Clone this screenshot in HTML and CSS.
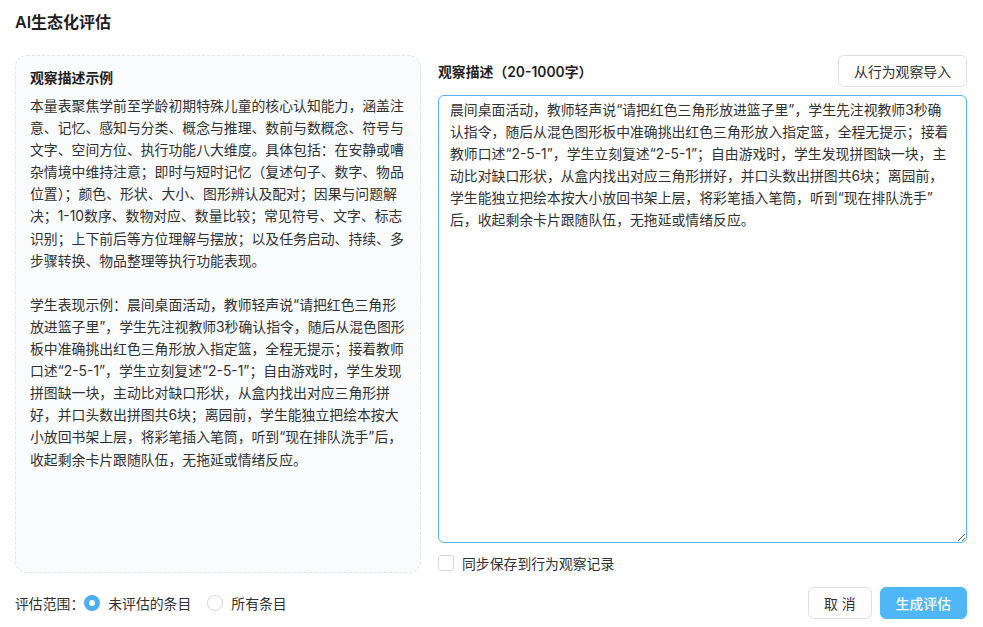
FILE: index.html
```html
<!DOCTYPE html>
<html lang="zh-CN">
<head>
  <meta charset="UTF-8">
  <meta name="viewport" content="width=device-width, initial-scale=1.0">
  <title>AI生态化评估</title>
  <link rel="stylesheet" href="styles.css">
</head>
<body>
  <div class="dialog">
    <div class="dialog-title">AI生态化评估</div>

    <div class="dialog-body">
      <div class="example-panel">
        <h3>观察描述示例</h3>
        <p>本量表聚焦学前至学龄初期特殊儿童的核心认知能力，涵盖注意、记忆、感知与分类、概念与推理、数前与数概念、符号与文字、空间方位、执行功能八大维度。具体包括：在安静或嘈杂情境中维持注意；即时与短时记忆（复述句子、数字、物品位置）；颜色、形状、大小、图形辨认及配对；因果与问题解决；1-10数序、数物对应、数量比较；常见符号、文字、标志识别；上下前后等方位理解与摆放；以及任务启动、持续、多步骤转换、物品整理等执行功能表现。</p>
        <p>学生表现示例：晨间桌面活动，教师轻声说“请把红色三角形放进篮子里”，学生先注视教师3秒确认指令，随后从混色图形板中准确挑出红色三角形放入指定篮，全程无提示；接着教师口述“2-5-1”，学生立刻复述“2-5-1”；自由游戏时，学生发现拼图缺一块，主动比对缺口形状，从盒内找出对应三角形拼好，并口头数出拼图共6块；离园前，学生能独立把绘本按大小放回书架上层，将彩笔插入笔筒，听到“现在排队洗手”后，收起剩余卡片跟随队伍，无拖延或情绪反应。</p>
      </div>

      <div class="input-panel">
        <div class="input-head">
          <span class="input-label">观察描述（20-1000字）</span>
          <button class="btn">从行为观察导入</button>
        </div>
        <textarea class="desc-input">晨间桌面活动，教师轻声说“请把红色三角形放进篮子里”，学生先注视教师3秒确认指令，随后从混色图形板中准确挑出红色三角形放入指定篮，全程无提示；接着教师口述“2-5-1”，学生立刻复述“2-5-1”；自由游戏时，学生发现拼图缺一块，主动比对缺口形状，从盒内找出对应三角形拼好，并口头数出拼图共6块；离园前，学生能独立把绘本按大小放回书架上层，将彩笔插入笔筒，听到“现在排队洗手”后，收起剩余卡片跟随队伍，无拖延或情绪反应。</textarea>
        <label class="check-row">
          <input type="checkbox" class="check-box">
          <span>同步保存到行为观察记录</span>
        </label>
      </div>
    </div>

    <div class="dialog-footer">
      <div class="scope">
        <span>评估范围：</span>
        <label class="radio">
          <input type="radio" name="scope" checked>
          <span>未评估的条目</span>
        </label>
        <label class="radio">
          <input type="radio" name="scope">
          <span>所有条目</span>
        </label>
      </div>
      <div class="actions">
        <button class="btn">取 消</button>
        <button class="btn btn-primary">生成评估</button>
      </div>
    </div>
  </div>
</body>
</html>
```

FILE: styles.css
```css
body {
  margin: 0;
  background-color: #fff;
  color: #303133;
  font-family: "Inter", "Noto Sans CJK SC", sans-serif;
  font-size: 13.85px;
}

.dialog {
  padding: 0 16px 0 15px;
}

.dialog-title {
  height: 44px;
  margin-bottom: 11px;
  line-height: 44px;
  font-size: 16px;
  font-weight: 600;
  color: #1f1f1f;
}

.dialog-body {
  display: grid;
  grid-template-columns: 406px 1fr;
  column-gap: 17px;
  height: 518px;
}

/* left: example text */
.example-panel {
  border: 1px dashed #e1e4e9;
  border-radius: 12px;
  background-color: #fafbfd;
  padding: 11px 12px 11px 14px;
}

.example-panel h3 {
  margin: 0;
  font-size: 13.85px;
  line-height: 22px;
  font-weight: 600;
  color: #1f1f1f;
}

.example-panel p {
  margin: 6px 0 0;
  line-height: 22.1px;
}

.example-panel p + p {
  margin-top: 22.1px;
}

/* right: input */
.input-panel {
  display: flex;
  flex-direction: column;
}

.input-head {
  display: flex;
  justify-content: space-between;
  align-items: center;
  height: 32px;
}

.input-label {
  font-weight: 600;
  color: #1f1f1f;
}

.btn {
  height: 32px;
  padding: 0 15px;
  border: 1px solid #dcdfe6;
  border-radius: 6px;
  background-color: #fff;
  color: #303133;
  font-family: inherit;
  font-size: 13.85px;
  cursor: pointer;
}

.btn:hover {
  border-color: #c0c4cc;
}

.btn-primary {
  border-color: #4fb6f7;
  background-color: #4fb6f7;
  color: #fff;
  font-weight: 500;
}

.btn-primary:hover {
  border-color: #3aa8f0;
  background-color: #3aa8f0;
}

.desc-input {
  box-sizing: border-box;
  width: 100%;
  height: 448px;
  margin-top: 8px;
  padding: 3px 16px 3px 11px;
  border: 1px solid #56b4f3;
  border-radius: 6px;
  outline: none;
  color: #303133;
  font-family: inherit;
  font-size: 13.85px;
  line-height: 22px;
  resize: vertical;
}

.check-row {
  display: flex;
  align-items: center;
  gap: 8px;
  margin-top: 10px;
  cursor: pointer;
}

.check-box {
  appearance: none;
  box-sizing: border-box;
  width: 16px;
  height: 16px;
  margin: 0;
  border: 1px solid #d4d7dd;
  border-radius: 3px;
  background-color: #fff;
}

/* footer */
.dialog-footer {
  display: flex;
  justify-content: space-between;
  align-items: center;
  height: 32px;
  margin-top: 14px;
}

.scope {
  display: flex;
  align-items: center;
}

.radio {
  display: flex;
  align-items: center;
  gap: 8px;
  margin-right: 16px;
  cursor: pointer;
}

.radio input {
  appearance: none;
  box-sizing: border-box;
  width: 16px;
  height: 16px;
  margin: 0;
  border: 1px solid #d4d7dd;
  border-radius: 50%;
  background-color: #fff;
}

.radio input:checked {
  border: 5px solid #4aaef4;
  background-color: #fff;
}

.actions {
  display: flex;
  gap: 8px;
}
```
